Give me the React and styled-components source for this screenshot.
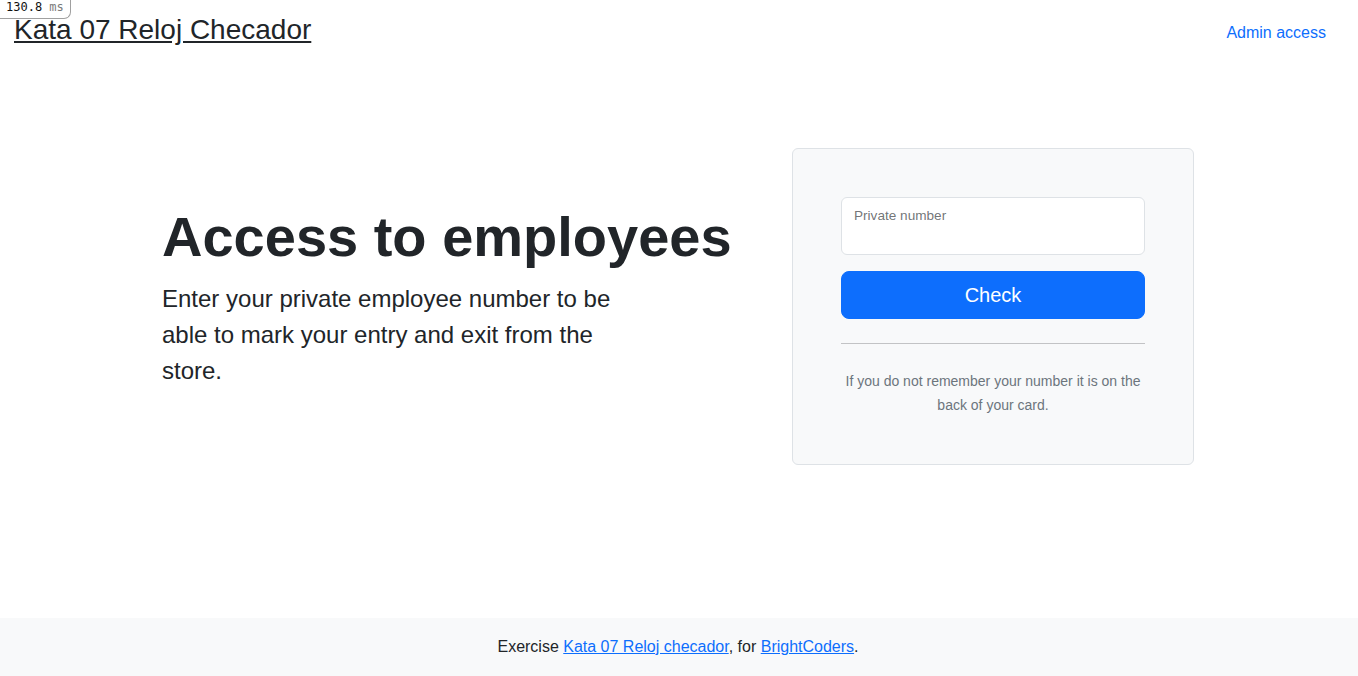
import React from "react";
import styled, { createGlobalStyle } from "styled-components";

const GlobalStyle = createGlobalStyle`
  *, *::before, *::after {
    box-sizing: border-box;
  }
  body {
    margin: 0;
    font-family: "Liberation Sans", Arial, sans-serif;
    font-size: 16px;
    line-height: 1.5;
    color: #212529;
    background-color: #ffffff;
  }
`;

const Page = styled.div`
  min-height: 100vh;
  display: flex;
  flex-direction: column;
`;

const TimingBadge = styled.div`
  position: fixed;
  top: 0;
  left: 0;
  width: 71px;
  height: 19px;
  padding: 0 0 0 6px;
  background-color: #ffffff;
  border: 1px solid #a0a0a0;
  border-top: none;
  border-left: none;
  border-bottom-right-radius: 7px;
  font-family: "DejaVu Sans Mono", monospace;
  font-size: 12px;
  line-height: 15px;
  color: #111111;
  z-index: 10;
  > span {
    color: #7a7a7a;
  }
`;

const Header = styled.header`
  display: flex;
  justify-content: space-between;
  align-items: flex-start;
  padding: 13px 16px 0 14px;
`;

const SiteTitle = styled.h3`
  margin: 0;
  font-size: 28px;
  font-weight: 500;
  line-height: 1.2;
  > a {
    color: #212529;
    text-decoration: underline;
  }
`;

const NavLink = styled.a`
  display: block;
  padding: 8px 16px;
  color: #0d6efd;
  text-decoration: none;
`;

const Main = styled.main`
  flex: 1;
`;

const Container = styled.div`
  max-width: 1080px;
  margin: 0 auto;
  padding: 47px 25px 48px 23px;
`;

const Row = styled.div`
  display: flex;
  align-items: center;
  gap: 48px;
  padding: 48px 0;
`;

const IntroColumn = styled.div`
  flex: 0 0 582px;
`;

const Heading = styled.h1`
  margin: 0 0 16px;
  font-size: 56px;
  font-weight: 700;
  line-height: 1;
`;

const Lead = styled.p`
  width: 485px;
  margin: 0 0 16px;
  font-size: 24px;
  font-weight: 300;
  line-height: 1.5;
`;

const FormCard = styled.form`
  flex: 1;
  padding: 48px 48px 47px;
  background-color: #f8f9fa;
  border: 1px solid #dee2e6;
  border-radius: 6px;
`;

const FloatingField = styled.div`
  position: relative;
  margin-bottom: 16px;
`;

const Input = styled.input`
  display: block;
  width: 100%;
  height: 58px;
  padding: 26px 12px 8px;
  font-family: inherit;
  font-size: 16px;
  color: #212529;
  background-color: #ffffff;
  border: 1px solid #dee2e6;
  border-radius: 6px;
  outline: none;
`;

const FloatingLabel = styled.label`
  position: absolute;
  top: 9px;
  left: 13px;
  font-size: 13.6px;
  line-height: 1.5;
  color: rgba(33, 37, 41, 0.65);
  pointer-events: none;
`;

const PrimaryButton = styled.button`
  display: block;
  width: 100%;
  height: 48px;
  padding: 8px 16px;
  font-family: inherit;
  font-size: 20px;
  line-height: 1.5;
  color: #ffffff;
  background-color: #0d6efd;
  border: 1px solid #0d6efd;
  border-radius: 8px;
  cursor: pointer;
`;

const Divider = styled.hr`
  margin: 24px 0;
  border: 0;
  border-top: 1px solid rgba(33, 37, 41, 0.25);
`;

const HelpText = styled.div`
  padding-top: 1px;
  text-align: center;
  line-height: 1.5;
  > small {
    font-size: 14px;
    color: #6c757d;
  }
`;

const Footer = styled.footer`
  padding: 17px 2px 17px 0;
  background-color: #f8f9fa;
  text-align: center;
  line-height: 24px;
  > a {
    color: #0d6efd;
    text-decoration: underline;
  }
`;

const App = () => {
  return (
    <Page>
      <GlobalStyle />
      <TimingBadge>
        130.8 <span>ms</span>
      </TimingBadge>
      <Header>
        <SiteTitle>
          <a href="#">Kata 07 Reloj Checador</a>
        </SiteTitle>
        <NavLink href="#">Admin access</NavLink>
      </Header>
      <Main>
        <Container>
          <Row>
            <IntroColumn>
              <Heading>Access to employees</Heading>
              <Lead>
                Enter your private employee number to be able to mark your
                entry and exit from the store.
              </Lead>
            </IntroColumn>
            <FormCard onSubmit={(e) => e.preventDefault()}>
              <FloatingField>
                <Input id="private-number" type="password" />
                <FloatingLabel htmlFor="private-number">
                  Private number
                </FloatingLabel>
              </FloatingField>
              <PrimaryButton type="submit">Check</PrimaryButton>
              <Divider />
              <HelpText>
                <small>
                  If you do not remember your number it is on the back of your
                  card.
                </small>
              </HelpText>
            </FormCard>
          </Row>
        </Container>
      </Main>
      <Footer>
        Exercise <a href="#">Kata 07 Reloj checador</a>, for{" "}
        <a href="#">BrightCoders</a>.
      </Footer>
    </Page>
  );
};

export default App;
